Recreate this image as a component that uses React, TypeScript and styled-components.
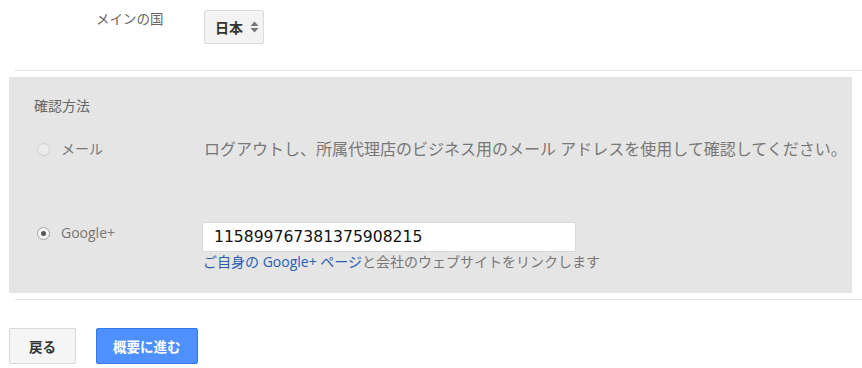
import React from 'react'
import styled, { createGlobalStyle } from 'styled-components'

const GlobalStyle = createGlobalStyle`
    html, body {
        margin: 0;
        padding: 0;
        background: #ffffff;
    }
    body {
        font-family: "Open Sans", "Noto Sans CJK JP", sans-serif;
        color: #666666;
    }
`

export default function App() {
    return (
        <Page>
            <GlobalStyle />
            <TopRow>
                <TopLabel>メインの国</TopLabel>
                <CountrySelect>
                    日本
                    <Arrows>
                        <svg width="9" height="12" viewBox="0 0 9 12">
                            <path d="M4.5 0.5 L8.5 5 L0.5 5 Z" fill="#777" />
                            <path d="M4.5 11.5 L8.5 7 L0.5 7 Z" fill="#777" />
                        </svg>
                    </Arrows>
                </CountrySelect>
            </TopRow>
            <Divider />
            <Panel>
                <SectionTitle>確認方法</SectionTitle>
                <OptionRow>
                    <OptionLabel>
                        <Radio />
                        メール
                    </OptionLabel>
                    <Description>
                        ログアウトし、所属代理店のビジネス用のメール アドレスを使用して確認してください。
                    </Description>
                </OptionRow>
                <OptionRow $spaced>
                    <OptionLabel>
                        <Radio $checked />
                        Google+
                    </OptionLabel>
                    <FieldColumn>
                        <IdInput value="115899767381375908215" readOnly />
                        <Hint>
                            <HintLink>ご自身の Google+ ページ</HintLink>と会社のウェブサイトをリンクします
                        </Hint>
                    </FieldColumn>
                </OptionRow>
            </Panel>
            <Divider $tight />
            <ButtonRow>
                <Button>戻る</Button>
                <Button $primary>概要に進む</Button>
            </ButtonRow>
        </Page>
    )
}

const Page = styled.div`
    width: 862px;
    height: 368px;
    overflow: hidden;
`

const TopRow = styled.div`
    display: flex;
    align-items: flex-start;
    height: 70px;
    padding-left: 96px;
    box-sizing: border-box;
    padding-top: 10px;
`

const TopLabel = styled.div`
    width: 108px;
    font-size: 13.5px;
    line-height: 19px;
    color: #666666;
`

const CountrySelect = styled.div`
    display: flex;
    align-items: center;
    gap: 7px;
    box-sizing: border-box;
    width: 60px;
    height: 34px;
    padding-left: 10px;
    background: #f3f3f3;
    border: 1px solid #dcdcdc;
    border-radius: 2px;
    font-size: 14px;
    font-weight: 700;
    color: #333333;
`

const Arrows = styled.span`
    display: flex;
    align-items: center;
`

const Divider = styled.div<{ $tight?: boolean }>`
    height: 1px;
    margin-left: 15px;
    background: #e2e2e2;
    margin-bottom: ${p => (p.$tight ? '28px' : '6px')};
`

const Panel = styled.div`
    box-sizing: border-box;
    width: 843px;
    height: 216px;
    margin-left: 9px;
    margin-bottom: 6px;
    padding: 19px 0 0 25px;
    background: #e5e5e5;
`

const SectionTitle = styled.div`
    font-size: 14px;
    line-height: 20px;
    color: #666666;
`

const OptionRow = styled.div<{ $spaced?: boolean }>`
    display: grid;
    grid-template-columns: 170px 1fr;
    align-items: start;
    margin-top: ${p => (p.$spaced ? '62px' : '22px')};
`

const OptionLabel = styled.div`
    display: flex;
    align-items: center;
    gap: 11px;
    padding-left: 3px;
    font-size: 14px;
    line-height: 22px;
    color: #777777;
`

const Radio = styled.span<{ $checked?: boolean }>`
    position: relative;
    box-sizing: border-box;
    width: 13px;
    height: 13px;
    border-radius: 50%;
    border: 1px solid ${p => (p.$checked ? '#a3a3a3' : '#cdcdcd')};
    background: ${p => (p.$checked ? '#f4f4f4' : '#ebebeb')};
    &::after {
        content: "";
        display: ${p => (p.$checked ? 'block' : 'none')};
        position: absolute;
        top: 3px;
        left: 3px;
        width: 5px;
        height: 5px;
        border-radius: 50%;
        background: #555555;
    }
`

const Description = styled.div`
    font-size: 16px;
    line-height: 22px;
    color: #777777;
    white-space: nowrap;
`

const FieldColumn = styled.div`
    display: flex;
    flex-direction: column;
    margin-left: -2px;
`

const IdInput = styled.input`
    box-sizing: border-box;
    width: 374px;
    height: 30px;
    padding: 0 0 0 11px;
    border: 1px solid #d9d9d9;
    border-radius: 0;
    background: #ffffff;
    font-family: "DejaVu Sans", sans-serif;
    font-size: 15.6px;
    color: #111111;
    outline: none;
`

const Hint = styled.div`
    font-size: 14px;
    line-height: 20px;
    color: #777777;
    padding-left: 1px;
`

const HintLink = styled.span`
    color: #2a5db0;
`

const ButtonRow = styled.div`
    display: flex;
    gap: 20px;
    padding-left: 9px;
`

const Button = styled.button<{ $primary?: boolean }>`
    box-sizing: border-box;
    height: 36px;
    padding: 0 ${p => (p.$primary ? '16px' : '19px')};
    border-radius: 2px;
    border: 1px solid ${p => (p.$primary ? '#3079ed' : '#d8d8d8')};
    background: ${p => (p.$primary ? '#4d90fe' : '#f5f5f5')};
    color: ${p => (p.$primary ? '#ffffff' : '#333333')};
    font-family: "Open Sans", "Noto Sans CJK JP", sans-serif;
    font-size: 13.5px;
    font-weight: 700;
    cursor: pointer;
`
